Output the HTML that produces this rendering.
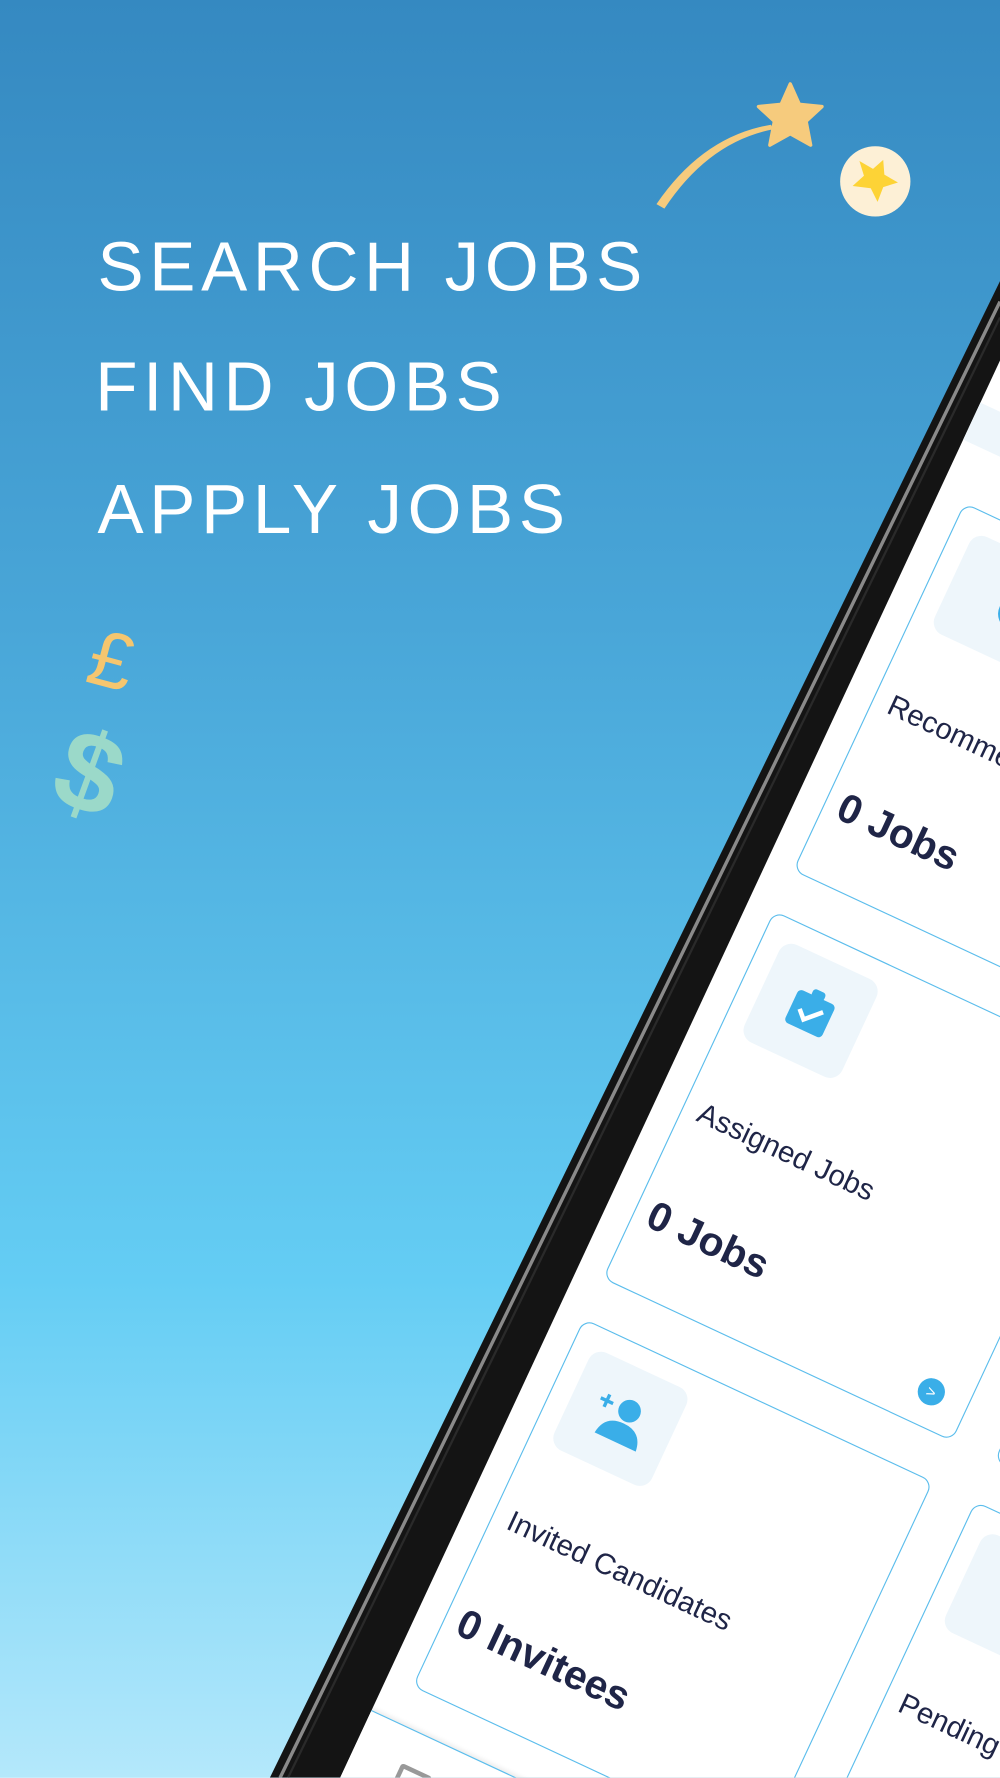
<!DOCTYPE html>
<html><head><meta charset="utf-8"><style>
html,body{margin:0;padding:0;width:1000px;height:1778px;overflow:hidden;position:relative}
#s{position:absolute;left:0;top:0;width:882px;height:1568px;transform:scale(1.13379);transform-origin:0 0;overflow:hidden;
background:linear-gradient(180deg,#3589c1 0%,#49a6d8 35%,#64cdf4 72%,#b4e8fb 100%);font-family:"Liberation Sans",Arial,sans-serif}
.h{position:absolute;color:#fff;font-size:61px;letter-spacing:5px;white-space:nowrap;line-height:1}
#scr{position:absolute;left:0;top:0;width:882px;height:1568px;background:#fff;clip-path:polygon(300px 1568px,882px 318px,882px 1568px)}
#grid{position:absolute;left:515px;top:1163px;transform:rotate(25deg);transform-origin:0 0}
.c{position:absolute;width:340px;height:358px;border:1px solid #5bbdec;border-radius:10px;box-sizing:border-box;background:#fff}
.ib{position:absolute;left:18px;top:18px;width:95px;height:95px;border-radius:12px;background:#eef6fb}
.t{position:absolute;left:14px;top:172px;font-size:26px;color:#1f2547;white-space:nowrap}
.n{position:absolute;left:12px;top:266px;font-size:36px;font-weight:bold;color:#1f2547;white-space:nowrap}
.ar{position:absolute;left:292px;top:313px;width:24px;height:24px;border-radius:50%;background:#3aaee8;color:#fff;font-size:14px;text-align:center;line-height:24px}
</style></head><body><div id="s">
<div class="h" style="left:86px;top:205px">SEARCH JOBS</div>
<div class="h" style="left:84px;top:311px">FIND JOBS</div>
<div class="h" style="left:86px;top:419px">APPLY JOBS</div>
<svg style="position:absolute;left:0;top:0" width="882" height="1568">
<path d="M579 180 Q620 120 680 110 L682 114 Q625 125 586 184 Z" fill="#f6cb7d"/>
<polygon points="697,74 705,92 725,94 711,107 715,128 697,118 679,128 683,107 669,94 689,92" fill="#f6cb7d" stroke="#f6cb7d" stroke-linejoin="round" stroke-width="3"/>
<ellipse cx="772" cy="160" rx="31" ry="31" fill="#fdf0d6"/>
<polygon points="779,141 780,154 792,161 779,165 774,178 768,166 752,164 762,155 758,142 770,149" fill="#fdd336"/>
<text x="80" y="608" font-family="Liberation Sans,sans-serif" font-size="70" fill="#f5c66f" transform="rotate(15 105 580)">£</text>
<text x="52" y="718" font-family="Liberation Sans,sans-serif" font-weight="bold" font-size="100" fill="#9bd9c9" transform="rotate(20 85 680)">$</text>
<polygon points="238,1568 882,248 882,1568" fill="#141414"/>
<line x1="247" y1="1568" x2="882" y2="266" stroke="#8a8a8a" stroke-width="3"/>
<line x1="254" y1="1568" x2="882" y2="280" stroke="#2a2a2a" stroke-width="2"/>
</svg>
<div id="scr">
<div id="grid">
<div style="position:absolute;left:-40px;top:-880px;width:900px;height:36px;background:#eef6fb;border-radius:10px"></div>
<div class="c" style="left:0;top:-794px"><div class="ib"><div style="position:absolute;left:48px;top:36px;width:30px;height:30px;border-radius:50%;background:#3aaee8"></div></div><div class="t">Recommended Jobs</div><div class="n">0 Jobs</div><div class="ar">&gt;</div></div>
<div class="c" style="left:0;top:-397px"><div class="ib"><svg width="95" height="95"><rect x="30" y="34" width="36" height="32" rx="4" fill="#3aaee8"/><rect x="42" y="28" width="12" height="8" rx="3" fill="#3aaee8"/><path d="M38 50 L45 57 L58 44" stroke="#fff" stroke-width="4" fill="none"/></svg></div><div class="t">Assigned Jobs</div><div class="n">0 Jobs</div><div class="ar">&gt;</div></div>
<div class="c" style="left:0;top:0"><div class="ib"><svg width="95" height="95"><circle cx="52" cy="38" r="10" fill="#3aaee8"/><path d="M32 68 Q34 50 52 50 Q70 50 72 68 Z" fill="#3aaee8"/><path d="M24 38 h12 M30 32 v12" stroke="#3aaee8" stroke-width="3"/></svg></div><div class="t">Invited Candidates</div><div class="n">0 Invitees</div></div>
<div class="c" style="left:381px;top:-794px"></div>
<div class="c" style="left:381px;top:-397px"></div>
<div class="c" style="left:381px;top:0"><div class="ib"></div><div class="t">Pending</div></div>
<div style="position:absolute;left:-60px;top:392px;width:900px;height:120px;background:#fff;border-top:1px solid #5bbdec;box-shadow:0 -2px 4px rgba(0,0,0,.08)"><div style="position:absolute;left:80px;top:30px;width:22px;height:28px;border:4px solid #999;border-radius:3px"></div></div>
</div>
</div>
</div></body></html>
